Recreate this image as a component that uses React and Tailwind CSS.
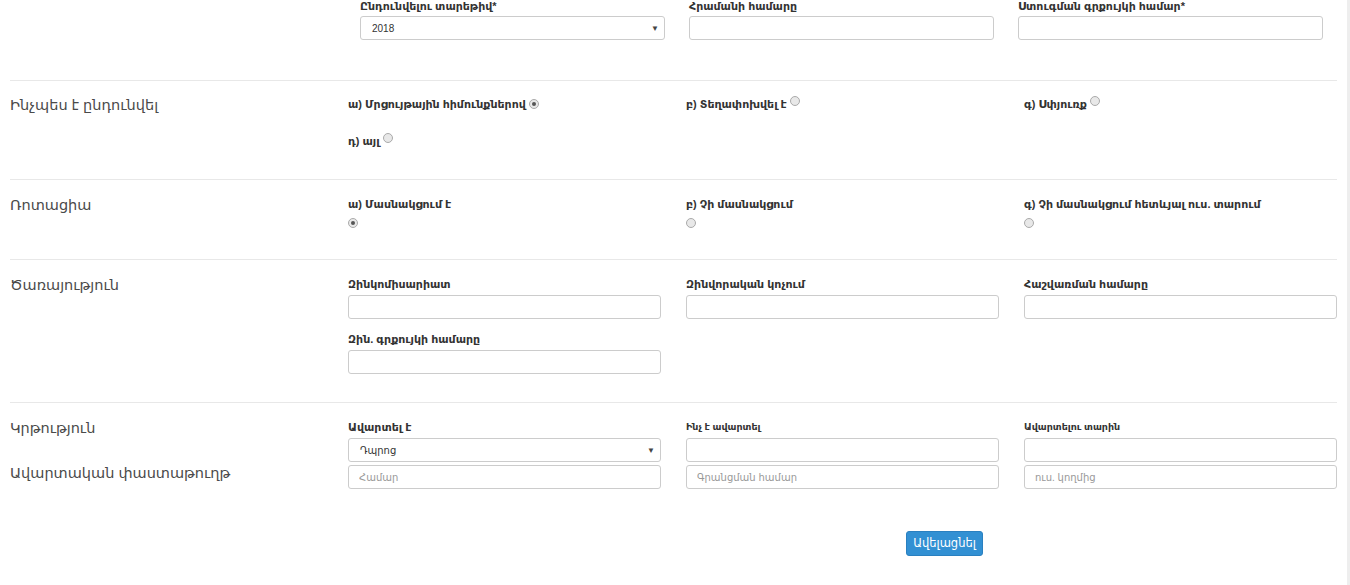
import React from "react";

const font = { fontFamily: '"Liberation Sans", "DejaVu Sans", sans-serif' };

const Label = ({ children, small }) => (
    <div className={`${small ? "text-[9.5px]" : "text-[11px]"} font-bold leading-[16px] text-[#333] whitespace-nowrap`}>{children}</div>
);

const Input = ({ placeholder, className = "" }) => (
    <input
        placeholder={placeholder}
        className={`block w-full h-[24px] border border-[#ccc] rounded-[3px] px-[10px] text-[10px] text-[#555] placeholder:text-[#999] bg-white outline-none ${className}`}
    />
);

const Select = ({ value, className = "" }) => (
    <div className={`relative w-full h-[24px] border border-[#ccc] rounded-[3px] bg-white flex items-center px-[11px] text-[10px] text-[#333] ${className}`}>
        <span>{value}</span>
        <span className="absolute right-[5px] top-[6px] text-[8px] text-[#444]">▼</span>
    </div>
);

const Radio = ({ checked }) => (
    <span className="inline-flex items-center justify-center w-[10px] h-[10px] rounded-full border border-[#aaa] bg-[#e8e8e8] align-[2px] ml-[3px]">
        {checked && <span className="w-[4px] h-[4px] rounded-full bg-[#555]" />}
    </span>
);

const SectionTitle = ({ children, className = "" }) => (
    <div className={`text-[14.5px] leading-[18px] text-[#4a4a4a] whitespace-nowrap ${className}`}>{children}</div>
);

const Cols = ({ children, className = "" }) => (
    <div className={`grid grid-cols-[313px_313px_313px] gap-x-[25px] ${className}`}>{children}</div>
);

export default function App() {
    return (
        <div className="w-[1350px] min-h-[585px] bg-white flex overflow-hidden" style={font}>
            <div className="flex-1 px-[10px]">
                {/* top row */}
                <div className="h-[81px] border-b border-[#e8e8e8]">
                    <div className="ml-[350px] grid grid-cols-[305px_305px_305px] gap-x-[24px]">
                        {[
                            "Ընդունվելու տարեթիվ*",
                            "Հրամանի համարը",
                            "Ստուգման գրքույկի համար*",
                        ].map((t, i) => (
                            <div key={t}>
                                <div className="text-[11px] font-bold leading-[12px] text-[#333] whitespace-nowrap">{t}</div>
                                {i === 0 ? <Select value="2018" className="mt-[4px]" /> : <Input className="mt-[4px]" />}
                            </div>
                        ))}
                    </div>
                </div>

                {/* how admitted */}
                <div className="flex border-b border-[#e8e8e8] pt-[15px] pb-[30px]">
                    <div className="w-[338px]">
                        <SectionTitle>Ինչպես է ընդունվել</SectionTitle>
                    </div>
                    <Cols className="gap-y-[21px]">
                        <Label>ա) Մրցույթային հիմունքներով<Radio checked /></Label>
                        <Label>բ) Տեղափոխվել է<Radio /></Label>
                        <Label>գ) Սփյուռք<Radio /></Label>
                        <Label>դ) այլ<Radio /></Label>
                    </Cols>
                </div>

                {/* rotation */}
                <div className="flex border-b border-[#e8e8e8] pt-[16px] pb-[31px]">
                    <div className="w-[338px]">
                        <SectionTitle>Ռոտացիա</SectionTitle>
                    </div>
                    <Cols>
                        {[
                            ["ա) Մասնակցում է", true],
                            ["բ) Չի մասնակցում", false],
                            ["գ) Չի մասնակցում հետևյալ ուս. տարում", false],
                        ].map(([t, c]) => (
                            <div key={t}>
                                <Label>{t}</Label>
                                <div className="mt-[6px] h-[10px] flex">
                                    <span className="inline-flex items-center justify-center w-[10px] h-[10px] rounded-full border border-[#aaa] bg-[#e8e8e8]">
                                        {c && <span className="w-[4px] h-[4px] rounded-full bg-[#555]" />}
                                    </span>
                                </div>
                            </div>
                        ))}
                    </Cols>
                </div>

                {/* service */}
                <div className="flex border-b border-[#e8e8e8] pt-[16px] pb-[28px]">
                    <div className="w-[338px]">
                        <SectionTitle>Ծառայություն</SectionTitle>
                    </div>
                    <Cols className="gap-y-[12px]">
                        {["Զինկոմիսարիատ", "Զինվորական կոչում", "Հաշվառման համարը", "Զին. գրքույկի համարը"].map((t) => (
                            <div key={t}>
                                <Label>{t}</Label>
                                <Input className="mt-[3px]" />
                            </div>
                        ))}
                    </Cols>
                </div>

                {/* education */}
                <div className="flex pt-[16px]">
                    <div className="w-[338px]">
                        <SectionTitle>Կրթություն</SectionTitle>
                        <SectionTitle className="mt-[27px]">Ավարտական փաստաթուղթ</SectionTitle>
                    </div>
                    <Cols>
                        <div>
                            <Label>Ավարտել է</Label>
                            <Select value="Դպրոց" className="mt-[3px]" />
                            <Input placeholder="Համար" className="mt-[3px]" />
                        </div>
                        <div>
                            <Label small>Ինչ է ավարտել</Label>
                            <Input className="mt-[3px]" />
                            <Input placeholder="Գրանցման համար" className="mt-[3px]" />
                        </div>
                        <div>
                            <Label small>Ավարտելու տարին</Label>
                            <Input className="mt-[3px]" />
                            <Input placeholder="ուս. կողմից" className="mt-[3px]" />
                        </div>
                    </Cols>
                </div>

                <div className="mt-[41px] pl-[896px]">
                    <button className="h-[25px] w-[77px] rounded-[3px] bg-[#3290d3] border border-[#2a80c0] text-white text-[11.5px]">
                        Ավելացնել
                    </button>
                </div>
            </div>
            <div className="w-[3px] bg-[#eeeeee]" />
        </div>
    );
}
